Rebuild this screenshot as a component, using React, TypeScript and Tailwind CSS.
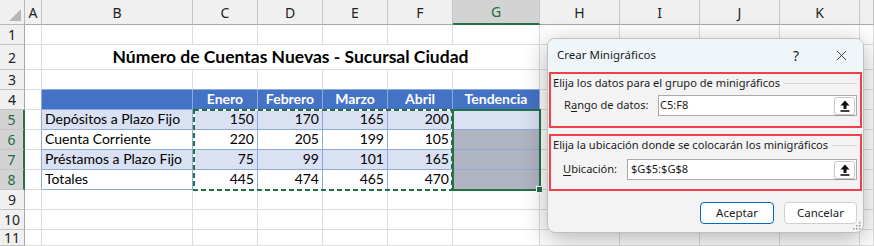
import { X } from 'lucide-react';

const letters = ['', 'A', 'B', 'C', 'D', 'E', 'F', 'G', 'H', 'I', 'J', 'K', ''];
const months = ['Enero', 'Febrero', 'Marzo', 'Abril', 'Tendencia'];
const rows: [string, number, number, number, number][] = [
  ['Depósitos a Plazo Fijo', 150, 170, 165, 200],
  ['Cuenta Corriente', 220, 205, 199, 105],
  ['Préstamos a Plazo Fijo', 75, 99, 101, 165],
  ['Totales', 445, 474, 465, 470],
];

const cellFont = { fontFamily: 'Lato, "Liberation Sans", sans-serif' };
const uiFont = { fontFamily: '"Segoe UI", "Noto Sans", "Open Sans", sans-serif' };

function ColHeader({ c }: { c: number }) {
  if (c === 0) {
    return (
      <div className="relative bg-[#f0f0f0] border-r border-b border-[#b8b8b8]">
        <svg className="absolute right-[3px] bottom-[3px]" width="12" height="12" viewBox="0 0 12 12">
          <path d="M12 0 L12 12 L0 12 Z" fill="#b7b7b7" />
        </svg>
      </div>
    );
  }
  const sel = c === 7;
  return (
    <div
      className={
        sel
          ? 'flex items-center justify-center bg-[#d3d3d3] text-[#1e6b3f] border-r border-[#c4c4c4] border-b-2 border-b-[#217346] text-[14px]'
          : 'flex items-center justify-center bg-[#f0f0f0] text-[#222] border-r border-[#c4c4c4] border-b border-b-[#a8a8a8] text-[14px]'
      }
      style={uiFont}
    >
      {letters[c]}
    </div>
  );
}

function RowHeader({ r }: { r: number }) {
  const sel = r >= 5 && r <= 8;
  return (
    <div
      className={
        sel
          ? 'flex items-center justify-center bg-[#d3d3d3] text-[#1e6b3f] border-b border-[#c4c4c4] border-r-2 border-r-[#217346] text-[14px]'
          : 'flex items-center justify-center bg-[#f0f0f0] text-[#222] border-b border-[#c4c4c4] border-r border-r-[#a8a8a8] text-[14px]'
      }
      style={uiFont}
    >
      {r}
    </div>
  );
}

function Cell({ r, c }: { r: number; c: number }) {
  const inTable = r >= 4 && r <= 8 && c >= 2 && c <= 7;
  const blueBottom = inTable || (r === 3 && c >= 2 && c <= 7);
  const blueRight = inTable || (c === 1 && r >= 4 && r <= 8);

  let bg = 'bg-white';
  if (inTable && r === 4) bg = 'bg-[#4472c4]';
  else if (inTable && c === 7 && r >= 6) bg = 'bg-[#b0b4c1]';
  else if (inTable && (r === 5 || r === 7)) bg = 'bg-[#d9e1f2]';

  const bb = blueBottom ? 'border-b border-b-[#8eaadb]' : 'border-b border-b-[#dcdcdc]';
  const br = blueRight ? 'border-r border-r-[#8eaadb]' : 'border-r border-r-[#dcdcdc]';

  let content: React.ReactNode = null;
  let align = 'justify-start pl-[3px]';
  let text = 'text-black';
  if (inTable && r === 4 && c >= 3) {
    content = months[c - 3];
    align = 'justify-center';
    text = 'text-white font-bold';
  } else if (inTable && r >= 5 && c === 2) {
    content = rows[r - 5][0];
  } else if (inTable && r >= 5 && c >= 3 && c <= 6) {
    content = rows[r - 5][c - 2];
    align = 'justify-end pr-[3px]';
  }

  return (
    <div className={`flex items-end pb-[1px] text-[14px] leading-[18px] ${bg} ${bb} ${br} ${align} ${text}`} style={cellFont}>
      {content}
    </div>
  );
}

function UploadBtn() {
  return (
    <div className="ml-auto mr-[1px] flex h-[18px] w-[21px] shrink-0 items-center justify-center rounded-[3px] border border-[#c9c9c9] bg-white shadow-[0_1px_1px_rgba(0,0,0,0.12)]">
      <svg width="10" height="12" viewBox="0 0 10 12">
        <path d="M5 0.5 L9.5 5.5 H6.5 V9 H3.5 V5.5 H0.5 Z" fill="#111" />
        <rect x="0.5" y="10.2" width="9" height="1.6" fill="#111" />
      </svg>
    </div>
  );
}

function Dialog() {
  return (
    <div
      className="absolute left-[547px] top-[38px] h-[195px] w-[317px] overflow-hidden rounded-[8px] border border-[#bfbfbf] bg-[#f3f3f3] text-[11.1px] text-[#1b1b1b] shadow-[0_6px_26px_rgba(0,0,0,0.3)]"
      style={uiFont}
    >
      <div className="flex h-[32px] items-center bg-[#eef6f9] pl-[9px] text-[11.5px]">
        <span>Crear Minigráficos</span>
        <span className="ml-auto mr-[34px] text-[14px]">?</span>
        <X size={17} strokeWidth={1.2} className="mr-[13px] text-[#222]" />
      </div>

      <div className="mx-[1px] mt-[1px] h-[56px] border-2 border-[#ef4147] pt-[1px]">
        <div className="flex h-[16px] items-center pl-[2px]">
          <span className="shrink-0 whitespace-nowrap">Elija los datos para el grupo de minigráficos</span>
          <div className="ml-[4px] mr-[3px] h-px flex-1 bg-[#d6d6d6]" />
        </div>
        <div className="mt-[4px] flex items-center">
          <div className="w-[107px] shrink-0 whitespace-nowrap pl-[13px]">
            R<span className="underline underline-offset-2">a</span>ngo de datos:
          </div>
          <div className="flex h-[21px] w-[199px] items-center border border-[#a9a9a9] bg-white pl-[1px]">
            <span>C5:F8</span>
            <UploadBtn />
          </div>
        </div>
      </div>

      <div className="mx-[1px] mt-[6px] h-[57px] border-2 border-[#ef4147] pt-[1px]">
        <div className="flex h-[16px] items-center pl-[2px]">
          <span className="shrink-0 whitespace-nowrap">Elija la ubicación donde se colocarán los minigráficos</span>
          <div className="ml-[4px] mr-[3px] h-px flex-1 bg-[#d6d6d6]" />
        </div>
        <div className="mt-[6px] flex items-center">
          <div className="w-[76px] shrink-0 whitespace-nowrap pl-[12px]">
            <span className="underline underline-offset-2">U</span>bicación:
          </div>
          <div className="flex h-[21px] w-[230px] items-center border border-[#a9a9a9] bg-white pl-[3px]">
            <span>$G$5:$G$8</span>
            <UploadBtn />
          </div>
        </div>
      </div>

      <div className="mt-[11px] flex justify-end gap-[10px] pr-[6px]">
        <button className="h-[22px] w-[74px] rounded-[4px] border border-[#0067c0] bg-white text-[11.5px]">Aceptar</button>
        <button className="h-[22px] w-[73px] rounded-[4px] border border-[#d0d0d0] bg-white text-[11.5px]">Cancelar</button>
      </div>

      <svg className="absolute bottom-[2px] right-[2px]" width="8" height="8" viewBox="0 0 8 8">
        <rect x="6" y="0" width="1.5" height="1.5" fill="#9a9a9a" />
        <rect x="3" y="3" width="1.5" height="1.5" fill="#9a9a9a" />
        <rect x="6" y="3" width="1.5" height="1.5" fill="#9a9a9a" />
        <rect x="0" y="6" width="1.5" height="1.5" fill="#9a9a9a" />
        <rect x="3" y="6" width="1.5" height="1.5" fill="#9a9a9a" />
        <rect x="6" y="6" width="1.5" height="1.5" fill="#9a9a9a" />
      </svg>
    </div>
  );
}

export default function App() {
  const body: React.ReactNode[] = [];
  for (let r = 1; r <= 11; r++) {
    body.push(<RowHeader key={`h${r}`} r={r} />);
    for (let c = 1; c <= 12; c++) {
      if (r === 2 && c === 2) {
        body.push(
          <div
            key="title"
            className="col-span-6 flex items-end justify-center border-b border-[#dcdcdc] border-r bg-white pb-[1px] text-[17.5px] font-bold leading-[22px] text-black"
            style={cellFont}
          >
            Número de Cuentas Nuevas - Sucursal Ciudad
          </div>
        );
        c = 7;
        continue;
      }
      body.push(<Cell key={`${r}-${c}`} r={r} c={c} />);
    }
  }

  return (
    <div className="relative h-[246px] w-[874px] overflow-hidden bg-white">
      <div className="grid grid-cols-[25px_17px_151px_65px_65px_65px_65px_87px_80px_80px_80px_80px_14px] grid-rows-[25px_20px_25px_20px_20px_20px_20px_20px_20px_20px_20px_16px]">
        {letters.map((_, c) => (
          <ColHeader key={`c${c}`} c={c} />
        ))}
        {body}
      </div>

      {/* marching ants around C5:F8 */}
      <svg className="pointer-events-none absolute left-0 top-0" width="874" height="246">
        <rect x="194" y="110" width="258" height="80" fill="none" stroke="#fff" strokeWidth="2" />
        <rect x="194" y="110" width="258" height="80" fill="none" stroke="#217346" strokeWidth="2" strokeDasharray="5 3" />
      </svg>

      {/* selection G5:G8 */}
      <div className="pointer-events-none absolute left-[452px] top-[109px] h-[82px] w-[89px] border-2 border-[#217346]">
        <div className="absolute -bottom-[4px] -right-[4px] h-[7px] w-[7px] border border-white bg-[#217346]" />
      </div>

      <Dialog />
    </div>
  );
}
